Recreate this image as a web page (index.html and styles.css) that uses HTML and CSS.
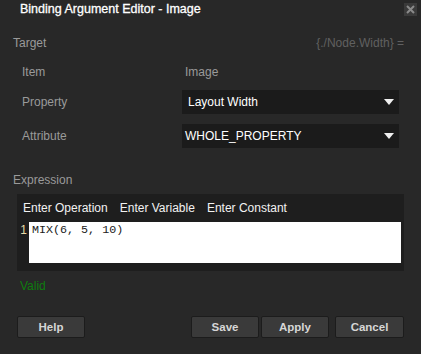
FILE: index.html
```html
<!DOCTYPE html>
<html>
<head>
    <title>Binding Argument Editor - Image</title>
    <link rel="stylesheet" href="styles.css">
</head>
<body>
    <div class="dialog">
        <div class="titlebar">
            <span class="title">Binding Argument Editor - Image</span>
            <button class="close" type="button">
                <svg width="9" height="9" viewBox="0 0 9 9">
                    <path d="M1 1 L8 8 M8 1 L1 8" stroke="#8a8a8a" stroke-width="2"/>
                </svg>
            </button>
        </div>

        <div class="target-row">
            <span class="section-label">Target</span>
            <span class="binding">{./Node.Width} =</span>
        </div>

        <div class="fields">
            <div class="field field-item">
                <span class="field-label">Item</span>
                <span class="field-value">Image</span>
            </div>
            <div class="field">
                <span class="field-label">Property</span>
                <div class="dropdown dropdown-wide">
                    <span>Layout Width</span>
                    <span class="arrow"></span>
                </div>
            </div>
            <div class="field">
                <span class="field-label">Attribute</span>
                <div class="dropdown">
                    <span>WHOLE_PROPERTY</span>
                    <span class="arrow"></span>
                </div>
            </div>
        </div>

        <div class="section-label expression-label">Expression</div>
        <div class="expression">
            <div class="toolbar">
                <span>Enter Operation</span>
                <span>Enter Variable</span>
                <span>Enter Constant</span>
            </div>
            <div class="editor">
                <span class="line-number">1</span>
                <div class="code">MIX(6, 5, 10)</div>
            </div>
        </div>
        <div class="status">Valid</div>

        <div class="footer">
            <button type="button">Help</button>
            <div class="spacer"></div>
            <button type="button">Save</button>
            <button type="button" class="apply">Apply</button>
            <button type="button" class="cancel">Cancel</button>
        </div>
    </div>
</body>
</html>
```

FILE: styles.css
```css
* {
    box-sizing: border-box;
}
body {
    margin: 0;
    background-color: #282828;
    font-family: "Liberation Sans", Arial, sans-serif;
    font-size: 12px;
    color: #9a9a9a;
}
.dialog {
    width: 421px;
    height: 354px;
    display: flex;
    flex-direction: column;
}
.titlebar {
    display: flex;
    justify-content: space-between;
    align-items: flex-start;
    height: 20px;
    padding: 2px 4px 0 20px;
}
.title {
    color: #ffffff;
    font-size: 12.5px;
    line-height: 15px;
    -webkit-text-stroke: 0.3px #ffffff;
}
.close {
    width: 13px;
    height: 13px;
    margin-top: 1px;
    padding: 0;
    border: none;
    background-color: #3a3a3a;
    display: flex;
    align-items: center;
    justify-content: center;
}
.target-row {
    display: flex;
    justify-content: space-between;
    margin-top: 15px;
    padding: 0 17px 0 13px;
    line-height: 16px;
}
.binding {
    color: #606060;
}
.fields {
    display: flex;
    flex-direction: column;
    gap: 10px;
    margin-top: 9px;
    padding: 0 22px;
}
.field {
    display: grid;
    grid-template-columns: 160px 1fr;
    align-items: center;
    height: 24px;
}
.field-item {
    margin-bottom: -4px;
}
.field-value {
    padding-left: 3px;
}
.dropdown {
    display: flex;
    justify-content: space-between;
    align-items: center;
    height: 24px;
    padding: 0 5px 0 3px;
    background-color: #1b1b1b;
    color: #ffffff;
}
.dropdown-wide {
    padding-left: 6px;
}
.arrow {
    width: 0;
    height: 0;
    border-left: 5px solid transparent;
    border-right: 5px solid transparent;
    border-top: 6px solid #f0f0f0;
}
.expression-label {
    margin-top: 24px;
    padding-left: 13px;
    line-height: 16px;
}
.expression {
    margin: 6px 17px 0 17px;
    height: 77px;
    padding: 0 3px 8px 0;
    background-color: #1e1e1e;
    display: flex;
    flex-direction: column;
}
.toolbar {
    display: flex;
    gap: 12px;
    height: 28px;
    align-items: center;
    padding-left: 6px;
    color: #f2f2f2;
}
.editor {
    flex: 1;
    display: flex;
}
.line-number {
    width: 12px;
    padding-right: 2px;
    text-align: right;
    color: #e8dba6;
    line-height: 16px;
}
.code {
    flex: 1;
    background-color: #ffffff;
    color: #202020;
    padding: 0 3px;
    font-family: "Liberation Mono", "Courier New", monospace;
    font-size: 11.7px;
    line-height: 16px;
}
.status {
    margin-top: 7px;
    padding-left: 20px;
    line-height: 16px;
    color: #0f7d0f;
}
.footer {
    display: flex;
    margin-top: 22px;
    padding: 0 17px;
}
.spacer {
    flex: 1;
}
.footer button {
    width: 68px;
    height: 22px;
    padding: 0;
    border: 1px solid #1c1c1c;
    border-radius: 2px;
    background-color: #3a3a3a;
    color: #d6d6d6;
    font-family: "Liberation Sans", Arial, sans-serif;
    font-size: 11.5px;
    font-weight: bold;
}
.footer .apply {
    margin-left: 2px;
}
.footer .cancel {
    margin-left: 6px;
    width: 69px;
}
```
